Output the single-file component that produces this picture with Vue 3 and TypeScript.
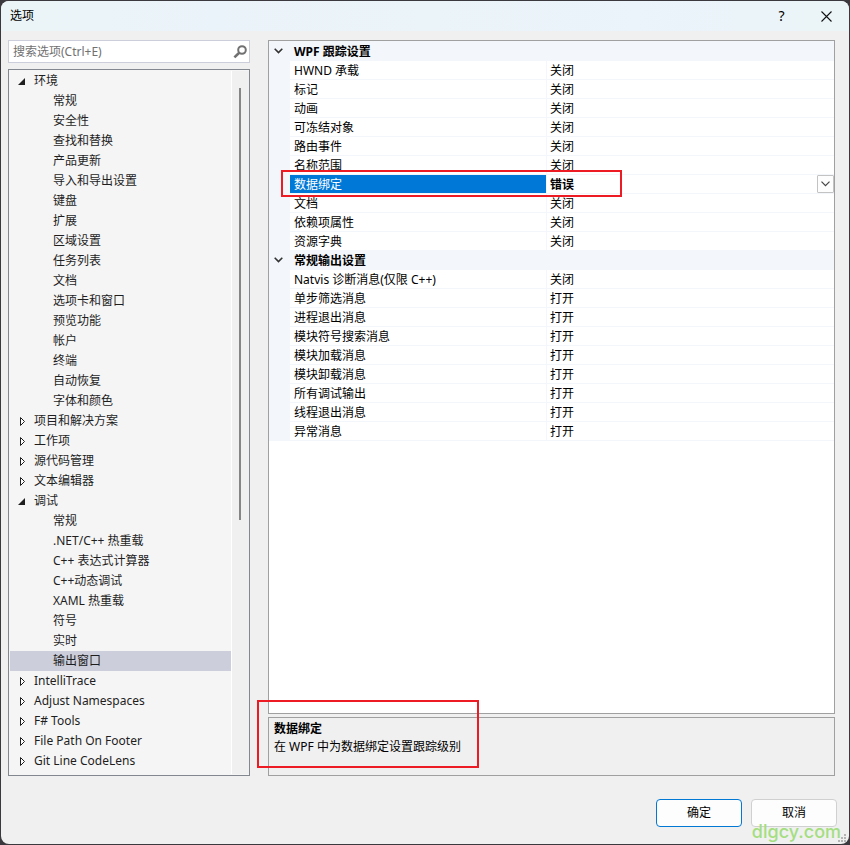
<script setup lang="ts">
import { ref } from 'vue'

interface TreeNode {
  label: string
  open?: boolean
  children?: string[]
}

interface Setting {
  name: string
  value: string
  editing?: boolean
}

interface Group {
  title: string
  open: boolean
  items: Setting[]
}

const query = ref('')
const selectedPage = ref('输出窗口')
const bindingLevel = ref('错误')
const levels = ['关闭', '严重', '错误', '警告', '信息', '详细', '全部']

const tree = ref<TreeNode[]>([
  {
    label: '环境',
    open: true,
    children: [
      '常规', '安全性', '查找和替换', '产品更新', '导入和导出设置', '键盘', '扩展', '区域设置',
      '任务列表', '文档', '选项卡和窗口', '预览功能', '帐户', '终端', '自动恢复', '字体和颜色',
    ],
  },
  { label: '项目和解决方案' },
  { label: '工作项' },
  { label: '源代码管理' },
  { label: '文本编辑器' },
  {
    label: '调试',
    open: true,
    children: [
      '常规', '.NET/C++ 热重载', 'C++ 表达式计算器', 'C++动态调试', 'XAML 热重载', '符号', '实时', '输出窗口',
    ],
  },
  { label: 'IntelliTrace' },
  { label: 'Adjust Namespaces' },
  { label: 'F# Tools' },
  { label: 'File Path On Footer' },
  { label: 'Git Line CodeLens' },
])

const off = (name: string): Setting => ({ name, value: '关闭' })
const on = (name: string): Setting => ({ name, value: '打开' })

const groups = ref<Group[]>([
  {
    title: 'WPF 跟踪设置',
    open: true,
    items: [
      off('HWND 承载'), off('标记'), off('动画'), off('可冻结对象'), off('路由事件'), off('名称范围'),
      { name: '数据绑定', value: '错误', editing: true },
      off('文档'), off('依赖项属性'), off('资源字典'),
    ],
  },
  {
    title: '常规输出设置',
    open: true,
    items: [
      off('Natvis 诊断消息(仅限 C++)'), on('单步筛选消息'), on('进程退出消息'), on('模块符号搜索消息'),
      on('模块加载消息'), on('模块卸载消息'), on('所有调试输出'), on('线程退出消息'), on('异常消息'),
    ],
  },
])
</script>

<template>
  <div class="desktop">
    <section class="dialog">
      <header class="titlebar">
        <h1 class="title">选项</h1>
        <button class="caption help" type="button">?</button>
        <button class="caption" type="button" aria-label="关闭窗口">
          <svg width="11" height="11" viewBox="0 0 11 11"><path d="M.5 .5 L10.500 10.500 M10.500 .5 L.5 10.500" fill="none" stroke="#111" stroke-width="1.100" /></svg>
        </button>
      </header>

      <main class="content">
        <aside class="sidebar">
          <div class="search">
            <input v-model="query" class="search-input" type="text" aria-label="搜索选项" placeholder="搜索选项(Ctrl+E)" />
            <button class="search-button" type="button" aria-label="搜索">
              <svg width="14" height="14" viewBox="0 0 14 14">
                <circle cx="9" cy="5" r="3.800" fill="none" stroke="#717171" stroke-width="2" />
                <path d="M6.200 7.800 L1.400 12.400" fill="none" stroke="#717171" stroke-width="2.600" />
              </svg>
            </button>
          </div>
          <nav class="tree">
            <ul class="nodes">
              <li v-for="node in tree" :key="node.label">
                <button class="row parent" type="button" :aria-expanded="!!node.open" @click="node.open = !node.open">
                  <svg class="arrow" width="8" height="10" viewBox="0 0 8 10">
                    <path v-if="node.open" d="M6 2 V9 H-1 Z" fill="#1e1e1e" />
                    <path v-else d="M1.500 1.500 V9.500 L5.500 5.500 Z" fill="#fff" stroke="#1e1e1e" />
                  </svg>
                  <span>{{ node.label }}</span>
                </button>
                <ul v-if="node.open && node.children" class="nodes">
                  <li v-for="child in node.children" :key="child">
                    <button class="row child" :class="{ selected: child === selectedPage }" type="button" @click="selectedPage = child">
                      {{ child }}
                    </button>
                  </li>
                </ul>
              </li>
            </ul>
            <div class="scrollbar"><div class="thumb"></div></div>
          </nav>
        </aside>

        <div class="details">
          <div class="grid">
            <table class="properties">
              <colgroup>
                <col class="gutter-col" />
                <col class="name-col" />
                <col />
              </colgroup>
              <tbody v-for="group in groups" :key="group.title">
                <tr class="group">
                  <td class="gutter">
                    <button class="toggle" type="button" :aria-label="group.title" @click="group.open = !group.open">
                      <svg width="9" height="6" viewBox="0 0 9 6"><path d="M.7 .8 L4.500 4.600 L8.300 .8" fill="none" stroke="#333" stroke-width="1.600" /></svg>
                    </button>
                  </td>
                  <th colspan="2" scope="colgroup">{{ group.title }}</th>
                </tr>
                <template v-if="group.open">
                  <tr v-for="item in group.items" :key="item.name" :class="{ active: item.editing }">
                    <td class="gutter"></td>
                    <td class="name">{{ item.name }}</td>
                    <td class="value">
                      <div v-if="item.editing" class="editor">
                        <select v-model="bindingLevel" class="level" aria-label="数据绑定">
                          <option v-for="level in levels" :key="level">{{ level }}</option>
                        </select>
                        <span class="drop">
                          <svg width="9" height="6" viewBox="0 0 9 6"><path d="M.5 .7 L4.500 4.700 L8.500 .7" fill="none" stroke="#444" stroke-width="1.200" /></svg>
                        </span>
                        <span class="mark mark-row"></span>
                      </div>
                      <template v-else>{{ item.value }}</template>
                    </td>
                  </tr>
                </template>
              </tbody>
            </table>
          </div>
          <div class="description">
            <h2>数据绑定</h2>
            <p>在 WPF 中为数据绑定设置跟踪级别</p>
            <span class="mark mark-description"></span>
          </div>
        </div>
      </main>

      <footer class="actions">
        <button class="action primary" type="button">确定</button>
        <button class="action" type="button">取消</button>
      </footer>

      <svg class="grip" width="8" height="8" viewBox="0 0 8 8" fill="#b4b4b4">
        <path d="M6 0h2v2H6z M3 3h2v2H3z M6 3h2v2H6z M0 6h2v2H0z M3 6h2v2H3z M6 6h2v2H6z" />
      </svg>
      <span class="watermark">dlgcy.com</span>
    </section>
  </div>
</template>

<style>
body {
  margin: 0;
  background: #3b393d;
}
</style>

<style scoped>
.desktop,
.desktop * {
  box-sizing: border-box;
}

.desktop {
  display: flex;
  min-height: 100vh;
  padding: 1px;
  color: #000;
  font: 12px/18px "Noto Sans", "Noto Sans CJK SC", sans-serif;
}

button,
input,
select {
  margin: 0;
  padding: 0;
  border: 0;
  background: none;
  color: inherit;
  font: inherit;
}

.dialog {
  position: relative;
  display: flex;
  flex: 1;
  flex-direction: column;
  min-width: 0;
  overflow: hidden;
  border-radius: 8px;
  background: #f0f0f0;
}

.titlebar {
  display: flex;
  align-items: center;
  height: 30px;
  padding-left: 9px;
  background: linear-gradient(90deg, #ebf5f7, #ebf3fa 25%, #ebf4f8 50%, #ebf3fb 75%, #ebf5f7);
}

.title {
  flex: 1;
  margin: 0;
  font-size: 12px;
  font-weight: 400;
}

.caption {
  display: flex;
  align-items: center;
  justify-content: center;
  width: 45px;
  height: 30px;
}

.help {
  font-size: 14px;
}

.content {
  display: flex;
  flex: 1;
  gap: 18px;
  padding: 9px 14px 0 7px;
}

.sidebar {
  display: flex;
  flex: none;
  flex-direction: column;
  gap: 6px;
  width: 242px;
}

.search {
  display: flex;
  height: 23px;
  border: 1px solid #cccedb;
  background: #fff;
}

.search-input {
  flex: 1;
  min-width: 0;
  padding-left: 4px;
  outline: 0;
}

.search-input::placeholder {
  color: #717171;
  opacity: 1;
}

.search-button {
  display: flex;
  align-items: center;
  justify-content: center;
  width: 18px;
}

.tree {
  display: flex;
  flex: 1;
  padding: 1px 0 1px 1px;
  border: 1px solid #828790;
  background: #f5f5f5;
  color: #1e1e1e;
}

.nodes {
  flex: 1;
  margin: 0;
  padding: 0;
  list-style: none;
}

.row {
  display: flex;
  align-items: center;
  width: 100%;
  height: 20px;
  text-align: left;
  white-space: nowrap;
}

.parent {
  gap: 7px;
  padding-left: 9px;
}

.arrow {
  overflow: visible;
}

.child {
  padding-left: 43px;
}

.selected {
  background: #cccedb;
}

.scrollbar {
  width: 18px;
  padding: 17px 0 0 7px;
  border-left: 1px solid #fff;
  background: #f0f0f0;
}

.thumb {
  width: 2px;
  height: 63%;
  background: #868686;
}

.details {
  display: flex;
  flex: 1;
  flex-direction: column;
  gap: 3px;
  min-width: 0;
}

.grid {
  flex: 1;
  border: 1px solid #a0a0a0;
  background: #fff;
}

.properties {
  width: 100%;
  border-spacing: 0;
  line-height: 16px;
  table-layout: fixed;
}

.gutter-col {
  width: 21px;
}

.name-col {
  width: 257px;
}

.properties td,
.properties th {
  height: 19px;
  padding: 2px 0 0 4px;
  border-bottom: 1px solid #f3f6fb;
  text-align: left;
  white-space: nowrap;
}

.properties tbody:first-of-type .group td,
.properties tbody:first-of-type .group th {
  height: 20px;
}

.properties .name {
  border-right: 1px solid #f3f6fb;
}

.properties .value {
  padding-left: 3px;
}

.properties .gutter {
  padding: 0;
  background: #f3f6fb;
}

.group th {
  background: #f3f6fb;
}

.toggle {
  display: flex;
  align-items: center;
  justify-content: center;
  width: 19px;
  height: 18px;
}

.active .name {
  background: #0078d7;
  background-clip: padding-box;
  color: #fff;
}

.editor {
  position: relative;
  display: flex;
  height: 16px;
}

.level {
  flex: 1;
  appearance: none;
  outline: 0;
  font-weight: 700;
}

.drop {
  position: absolute;
  top: -2px;
  right: 0;
  display: flex;
  align-items: center;
  justify-content: center;
  width: 17px;
  height: 18px;
  border: 1px solid #c3c3c3;
  border-radius: 1px;
  background: #fdfdfd;
  pointer-events: none;
}

.mark {
  position: absolute;
  border: 2px solid #ed1c24;
  pointer-events: none;
}

.mark-row {
  top: -7px;
  left: -269px;
  width: 341px;
  height: 27px;
}

.description {
  position: relative;
  height: 59px;
  padding: 2px 5px;
  border: 1px solid #a0a0a0;
}

.description h2,
.description p {
  margin: 0;
  font-size: 12px;
  line-height: 18px;
}

.mark-description {
  top: -18px;
  left: -12px;
  width: 222px;
  height: 68px;
}

.actions {
  display: flex;
  justify-content: flex-end;
  gap: 9px;
  padding: 23px 12px 17px;
}

.action {
  width: 86px;
  height: 28px;
  border: 1px solid #d0d0d0;
  border-radius: 4px;
  background: #fdfdfd;
}

.primary {
  border-color: #0078d4;
}

.grip {
  position: absolute;
  right: 3px;
  bottom: 2px;
}

.watermark {
  position: absolute;
  right: 8px;
  bottom: 3px;
  color: #a4de80;
  font: 500 18px/18px Inter, sans-serif;
  pointer-events: none;
}
</style>
